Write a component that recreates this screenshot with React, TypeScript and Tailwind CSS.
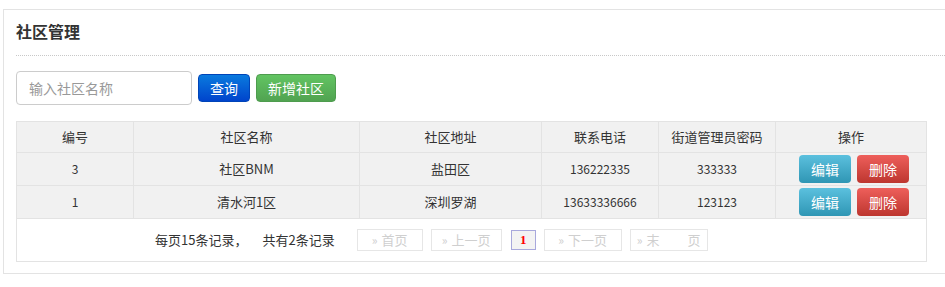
import React from "react";

const font = { fontFamily: '"Noto Sans CJK SC", "Liberation Sans", sans-serif' };

const rows = [
  { id: "3", name: "社区BNM", addr: "盐田区", phone: "136222335", pwd: "333333" },
  { id: "1", name: "清水河1区", addr: "深圳罗湖", phone: "13633336666", pwd: "123123" },
];

function PageBtn({ label, w, gapText }: { label: string; w: string; gapText?: boolean }) {
  return (
    <div className={`${w} h-[22px] border border-[#e6e6e6] bg-white flex items-center justify-center text-[13px] text-[#cfcfcf] gap-[4px]`}>
      <span className="text-[12px]">»</span>
      {gapText ? (
        <span className="flex gap-[28px]"><span>末</span><span>页</span></span>
      ) : (
        <span>{label}</span>
      )}
    </div>
  );
}

export default function App() {
  return (
    <div className="w-[945px] h-[287px] overflow-hidden bg-white" style={font}>
      <div className="mt-[9px] ml-[3px] w-[942px] border-l border-t border-b border-[#e3e3e3] pb-[11px]">
        <div className="ml-[12px] pt-[11px] pb-[13px] border-b border-dotted border-[#c8c8c8]">
          <div className="text-[16px] leading-[21px] font-bold text-[#333]">社区管理</div>
        </div>
        <div className="ml-[12px] mt-[15px] flex items-center gap-[6px]">
          <div className="w-[176px] h-[34px] border border-[#cccccc] rounded-[4px] flex items-center pl-[12px] text-[14px] text-[#999]">
            输入社区名称
          </div>
          <button className="w-[52px] h-[28px] rounded-[4px] text-white text-[14px] bg-[linear-gradient(to_bottom,#0a7ade,#0044cc)] border border-[#0044b8]">
            查询
          </button>
          <button className="w-[80px] h-[28px] rounded-[4px] text-white text-[14px] bg-[linear-gradient(to_bottom,#62c462,#51a351)] border border-[#4e9c4e]">
            新增社区
          </button>
        </div>
        <div className="ml-[12px] mt-[16px] w-[911px] border border-[#e3e3e3]">
          <div className="flex h-[31px] bg-[#f1f1f1] text-[13px] text-[#333] border-b border-[#e3e3e3]">
            <div className="w-[117px] flex items-center justify-center border-r border-[#e3e3e3]">编号</div>
            <div className="w-[226px] flex items-center justify-center border-r border-[#e3e3e3]">社区名称</div>
            <div className="w-[182px] flex items-center justify-center border-r border-[#e3e3e3]">社区地址</div>
            <div className="w-[117px] flex items-center justify-center border-r border-[#e3e3e3]">联系电话</div>
            <div className="w-[117px] flex items-center justify-center border-r border-[#e3e3e3]">街道管理员密码</div>
            <div className="flex-1 flex items-center justify-center">操作</div>
          </div>
          {rows.map((r) => (
            <div key={r.id} className="flex h-[33px] bg-[#f1f1f1] text-[#333] border-b border-[#e3e3e3]">
              <div className="w-[117px] flex items-center justify-center border-r border-[#e3e3e3] text-[12px]">{r.id}</div>
              <div className="w-[226px] flex items-center justify-center border-r border-[#e3e3e3] text-[13px]">{r.name}</div>
              <div className="w-[182px] flex items-center justify-center border-r border-[#e3e3e3] text-[13px]">{r.addr}</div>
              <div className="w-[117px] flex items-center justify-center border-r border-[#e3e3e3] text-[12px]">{r.phone}</div>
              <div className="w-[117px] flex items-center justify-center border-r border-[#e3e3e3] text-[12px]">{r.pwd}</div>
              <div className="flex-1 flex items-center justify-center gap-[6px] pl-[6px]">
                <button className="w-[52px] h-[28px] rounded-[4px] text-white text-[14px] bg-[linear-gradient(to_bottom,#5bc0de,#2f96b4)]">
                  编辑
                </button>
                <button className="w-[52px] h-[28px] rounded-[4px] text-white text-[14px] bg-[linear-gradient(to_bottom,#ee5f5b,#bd362f)]">
                  删除
                </button>
              </div>
            </div>
          ))}
          <div className="h-[42px] bg-white flex items-center pl-[138px] text-[13px] text-[#333]">
            <span>每页15条记录，</span>
            <span className="ml-[15px]">共有2条记录</span>
            <div className="ml-[22px] flex items-center gap-[8px]">
              <PageBtn label="首页" w="w-[66px]" />
              <PageBtn label="上一页" w="w-[71px]" />
              <div className="ml-[1px] w-[25px] h-[20px] border border-[#a8a8dc] bg-[#f3f3f3] flex items-center justify-center text-[13px] font-bold text-[#ff0000]" style={{ fontFamily: '"Liberation Serif", serif' }}>
                1
              </div>
              <PageBtn label="下一页" w="w-[78px]" />
              <PageBtn label="" w="w-[78px]" gapText />
            </div>
          </div>
        </div>
      </div>
    </div>
  );
}
